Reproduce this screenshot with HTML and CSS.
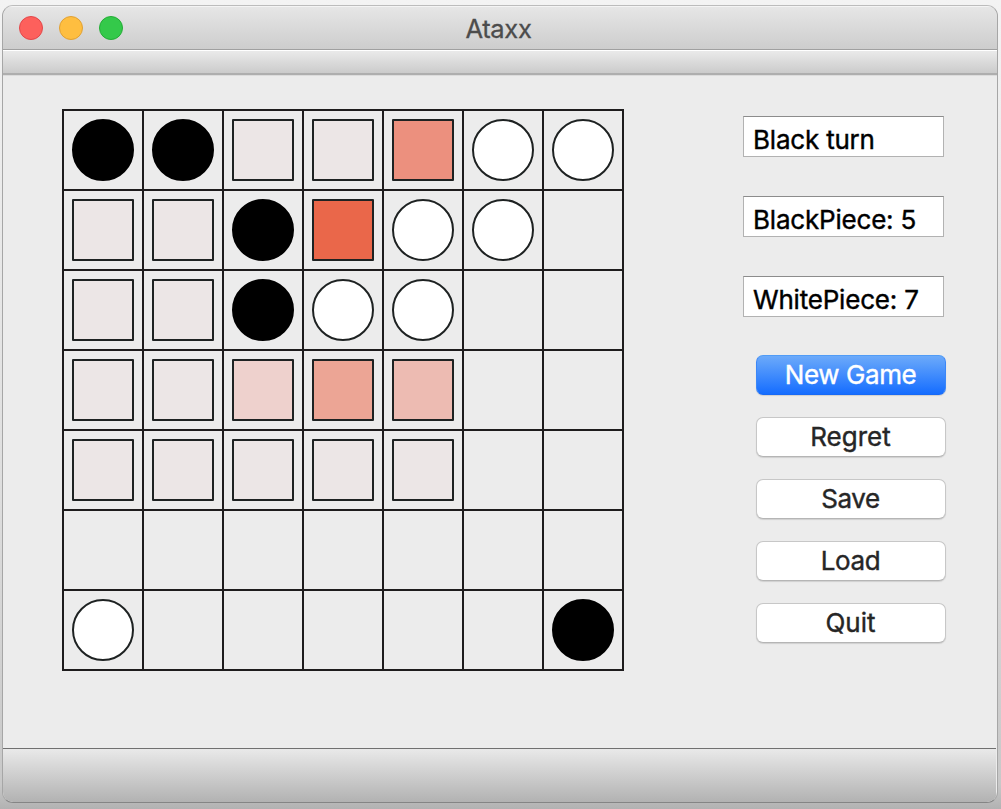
FILE: index.html
```html
<!DOCTYPE html>
<html lang="en">
<head>
<meta charset="utf-8">
<title>Ataxx</title>
<link rel="stylesheet" href="styles.css">
</head>
<body>
<div class="window">
  <header class="titlebar">
    <div class="lights"><span class="light close"></span><span class="light minimize"></span><span class="light zoom"></span></div>
    <h1 class="title">Ataxx</h1>
  </header>
  <div class="toolbar"></div>
  <main class="content">
    <div class="board">
      <div class="cell"><i class="piece black"></i></div><div class="cell"><i class="piece black"></i></div><div class="cell"><i class="hint"></i></div><div class="cell"><i class="hint"></i></div><div class="cell"><i class="hint heat4"></i></div><div class="cell"><i class="piece"></i></div><div class="cell"><i class="piece"></i></div>
      <div class="cell"><i class="hint"></i></div><div class="cell"><i class="hint"></i></div><div class="cell"><i class="piece black"></i></div><div class="cell"><i class="hint heat5"></i></div><div class="cell"><i class="piece"></i></div><div class="cell"><i class="piece"></i></div><div class="cell"></div>
      <div class="cell"><i class="hint"></i></div><div class="cell"><i class="hint"></i></div><div class="cell"><i class="piece black"></i></div><div class="cell"><i class="piece"></i></div><div class="cell"><i class="piece"></i></div><div class="cell"></div><div class="cell"></div>
      <div class="cell"><i class="hint"></i></div><div class="cell"><i class="hint"></i></div><div class="cell"><i class="hint heat1"></i></div><div class="cell"><i class="hint heat3"></i></div><div class="cell"><i class="hint heat2"></i></div><div class="cell"></div><div class="cell"></div>
      <div class="cell"><i class="hint"></i></div><div class="cell"><i class="hint"></i></div><div class="cell"><i class="hint"></i></div><div class="cell"><i class="hint"></i></div><div class="cell"><i class="hint"></i></div><div class="cell"></div><div class="cell"></div>
      <div class="cell"></div><div class="cell"></div><div class="cell"></div><div class="cell"></div><div class="cell"></div><div class="cell"></div><div class="cell"></div>
      <div class="cell"><i class="piece"></i></div><div class="cell"></div><div class="cell"></div><div class="cell"></div><div class="cell"></div><div class="cell"></div><div class="cell"><i class="piece black"></i></div>
    </div>
    <aside class="panel">
      <div class="fields">
        <div class="field"><span class="turn">Black turn</span></div>
        <div class="field"><span class="count">BlackPiece: 5</span></div>
        <div class="field"><span class="count">WhitePiece: 7</span></div>
      </div>
      <div class="buttons">
        <button class="button primary">New Game</button>
        <button class="button wide">Regret</button>
        <button class="button">Save</button>
        <button class="button">Load</button>
        <button class="button wide">Quit</button>
      </div>
    </aside>
  </main>
  <footer class="statusbar"></footer>
</div>
</body>
</html>
```
FILE: styles.css
```css
* { box-sizing: border-box; }
body {
  margin: 0;
  width: 1001px;
  height: 809px;
  padding: 5px 3px 6px 2px;
  overflow: hidden;
  background: linear-gradient(#f3f3f3, #dedede 60%, #c8c8c8 97%, #b2b2b2);
  font-family: Inter, "Liberation Sans", sans-serif;
  font-size: 26px;
}
.window {
  display: flex;
  flex-direction: column;
  width: 996px;
  height: 798px;
  border: 1px solid #a6a6a6;
  border-top-color: #bcbcbc;
  border-bottom-color: #858585;
  border-radius: 11px;
  overflow: hidden;
  background: #ececec;
}
.titlebar {
  display: grid;
  grid-template-columns: 1fr auto 1fr;
  align-items: center;
  height: 44px;
  padding: 0 16px;
  border-top: 1px solid #f4f4f4;
  border-bottom: 1px solid #a0a0a0;
  background: linear-gradient(#e6e6e6, #cdcdcd);
}
.lights { display: flex; gap: 16px; }
.light { width: 24px; height: 24px; border-radius: 50%; border: 1px solid #e2474a; background: #fd605c; }
.minimize { border-color: #e0a033; background: #febe40; }
.zoom { border-color: #24ac36; background: #34c94a; }
.title {
  margin: 0;
  padding: 2px 3px 0 0;
  font-size: 25.5px;
  line-height: 32px;
  font-weight: 400;
  letter-spacing: -0.3px;
  color: #4c4c4c;
  -webkit-text-stroke: 0.3px #4c4c4c;
}
.toolbar {
  height: 25px;
  border-top: 1px solid #fff;
  border-bottom: 2px solid #aeaeae;
  background: linear-gradient(#eaeaea, #cbcbcb);
}
.content {
  display: flex;
  align-items: flex-start;
  flex: 1;
  padding: 33px 51px 0 59px;
  border-top: 1px solid #dcdcdc;
}
.board {
  display: grid;
  grid-template-columns: repeat(7, 80px);
  grid-auto-rows: 80px;
  border-left: 2px solid #1e1c1d;
  border-top: 2px solid #1e1c1d;
}
.cell {
  display: grid;
  place-items: center;
  border-right: 2px solid #1e1c1d;
  border-bottom: 2px solid #1e1c1d;
}
.piece, .hint { width: 62px; height: 62px; border: 2px solid #1e2222; }
.piece { border-radius: 50%; background: #fff; }
.black { border-color: #000; background: #000; }
.hint { border-radius: 1px; background: #ece6e6; }
.heat1 { background: #eed1cd; }
.heat2 { background: #edbbb2; }
.heat3 { background: #eca595; }
.heat4 { background: #ec907e; }
.heat5 { background: #ea674a; }
.panel { padding: 7px 0 0 119px; }
.fields { display: grid; gap: 39px; }
.field {
  width: 201px;
  height: 41px;
  padding: 6px 0 0 9px;
  border: 1px solid #b2b2b2;
  border-top-color: #8c8c8c;
  background: #fff;
  color: #000;
  line-height: 34px;
  white-space: nowrap;
  -webkit-text-stroke: 0.4px #000;
}
.turn { letter-spacing: -0.2px; }
.count { letter-spacing: -0.2px; }
.buttons { display: grid; gap: 22px; margin: 38px 0 0 13px; }
.button {
  width: 190px;
  height: 40px;
  padding: 0 1px 0 0;
  border: 1px solid #c7c7c7;
  border-bottom-color: #b5b5b5;
  border-radius: 7px;
  background: #fff;
  box-shadow: 0 1px 1px #d0d0d0;
  color: #262626;
  font: 400 26px/38px Inter, "Liberation Sans", sans-serif;
  letter-spacing: -0.4px;
  -webkit-text-stroke: 0.4px currentColor;
}
.wide { letter-spacing: 0; }
.primary {
  border-color: #519cf6 #3b87f8 #1769f5;
  background: linear-gradient(#6caafa, #156dff);
  color: #fff;
}
.statusbar {
  height: 54px;
  margin-right: 1px;
  border-top: 1px solid #707070;
  background: linear-gradient(#e9e9e9, #b2b2b2);
}
```
